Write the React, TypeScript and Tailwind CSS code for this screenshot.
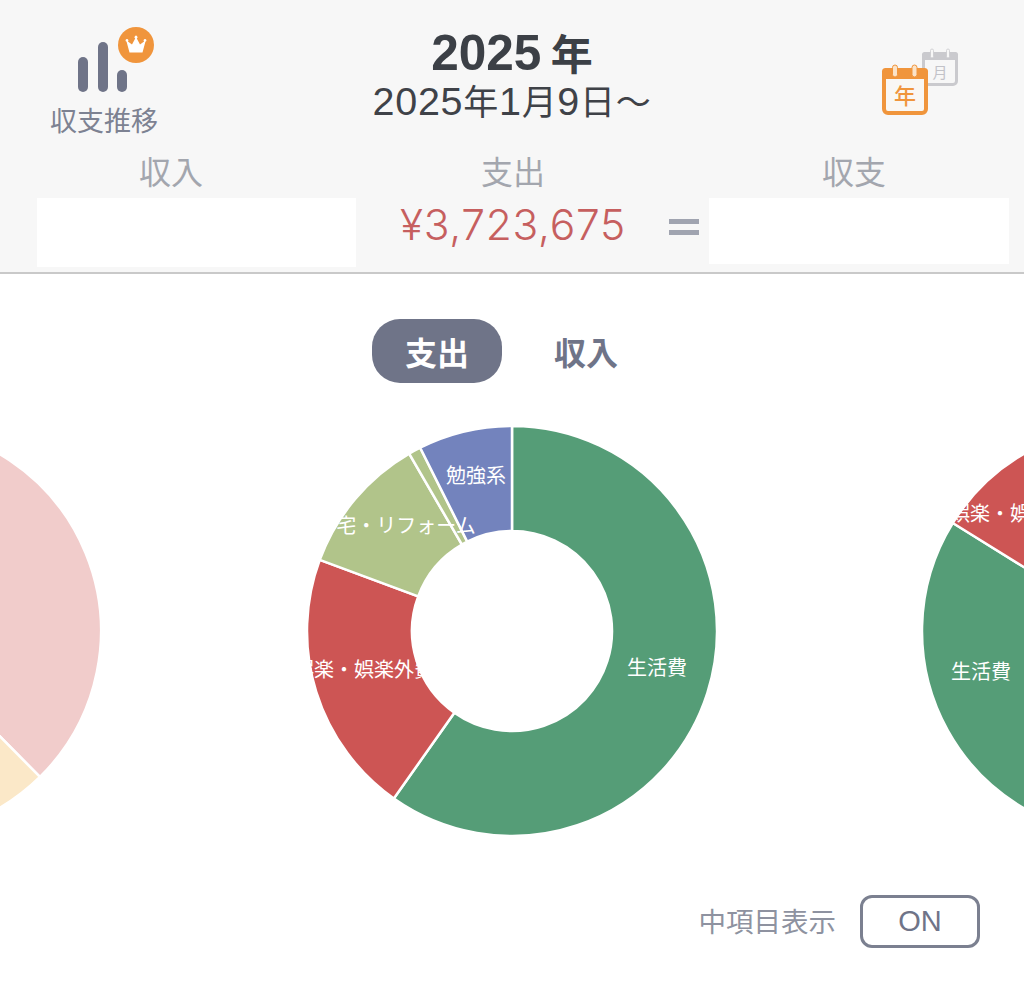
import React from "react";

const FONT = '"Noto Sans CJK JP", "Inter", sans-serif';
const LATIN = '"Inter", "Noto Sans CJK JP", sans-serif';
const HELV = '"Liberation Sans", "Noto Sans CJK JP", sans-serif';
const PRIMARY = "#6f7488";

function arc(cx: number, cy: number, R: number, r: number, a0: number, a1: number) {
  const p = (rad: number, a: number) => {
    const t = (a * Math.PI) / 180;
    return `${(cx + rad * Math.sin(t)).toFixed(2)} ${(cy - rad * Math.cos(t)).toFixed(2)}`;
  };
  const large = a1 - a0 > 180 ? 1 : 0;
  return `M${p(R, a0)} A${R} ${R} 0 ${large} 1 ${p(R, a1)} L${p(r, a1)} A${r} ${r} 0 ${large} 0 ${p(r, a0)} Z`;
}

type Seg = { a0: number; a1: number; c: string };

function Donut({ cx, cy, segs }: { cx: number; cy: number; segs: Seg[] }) {
  return (
    <g>
      {segs.map((s, i) => (
        <path key={i} d={arc(cx, cy, 205, 100, s.a0, s.a1)} fill={s.c} stroke="#ffffff" strokeWidth={2.5} />
      ))}
    </g>
  );
}

function BarsIcon() {
  return (
    <svg width="110" height="64" viewBox="0 0 110 64" className="block overflow-visible">
      <rect x="29" y="29" width="10" height="35" rx="5" fill={PRIMARY} />
      <rect x="49" y="14" width="10" height="50" rx="5" fill={PRIMARY} />
      <rect x="68" y="42" width="10" height="22" rx="5" fill={PRIMARY} />
      <circle cx="87" cy="17" r="18" fill="#f0953c" />
      <path
        d="M80.5 24.5 L77.6 13.8 a1.4 1.4 0 1 1 1.3 -.3 L83 16.6 L86.2 10.4 a1.5 1.5 0 1 1 1.6 0 L91 16.6 L95.1 13.5 a1.4 1.4 0 1 1 1.3 .3 L93.5 24.5 Z"
        fill="#ffffff"
      />
    </svg>
  );
}

function CalendarIcons() {
  return (
    <svg width="90" height="70" viewBox="0 0 90 70" className="block">
      <g>
        <rect x="43.5" y="7.5" width="33" height="31" rx="3.5" fill="#f7f7f7" stroke="#cacace" strokeWidth="3" />
        <rect x="42" y="6" width="36" height="8" rx="2.5" fill="#cacace" />
        <rect x="50.5" y="3" width="3" height="9" rx="1.5" fill="#f7f7f7" stroke="#cacace" strokeWidth="0.8" />
        <rect x="66.5" y="3" width="3" height="9" rx="1.5" fill="#f7f7f7" stroke="#cacace" strokeWidth="0.8" />
        <text x="60" y="32" textAnchor="middle" fontSize="15" fill="#c2c2c8" fontFamily={FONT}>
          月
        </text>
      </g>
      <g>
        <rect x="4" y="24" width="42" height="43" rx="4" fill="#f9f7f4" stroke="#f0953c" strokeWidth="4" />
        <rect x="2" y="22" width="46" height="11" rx="3.5" fill="#f0953c" />
        <rect x="12.5" y="19" width="5" height="12" rx="2.5" fill="#fbe3c8" stroke="#f0953c" strokeWidth="1" />
        <rect x="32" y="19" width="5" height="12" rx="2.5" fill="#fbe3c8" stroke="#f0953c" strokeWidth="1" />
        <text x="25" y="58" textAnchor="middle" fontSize="22" fontWeight="500" fill="#f0953c" fontFamily={FONT}>
          年
        </text>
      </g>
    </svg>
  );
}

function D({ children }: { children: React.ReactNode }) {
  return (
    <span className="text-[39.5px]" style={{ fontFamily: HELV }}>
      {children}
    </span>
  );
}

export default function App() {
  const GREEN = "#559d77";
  const RED = "#cd5554";
  const OLIVE = "#b1c48a";
  const BLUE = "#7383bd";
  return (
    <div className="w-[1024px] h-[992px] overflow-hidden bg-white" style={{ fontFamily: FONT }}>
      <header className="h-[274px] bg-[#f7f7f7] border-b-2 border-[#c9c9c9] flex flex-col">
        <div className="h-[143px] grid grid-cols-[210px_1fr_210px]">
          <div className="flex flex-col items-center pt-[28px]">
            <div className="w-[110px] -ml-[2px]">
              <BarsIcon />
            </div>
            <div className="text-[27px] leading-[40px] text-[#7d8292] -ml-[2px] mt-[8px] whitespace-nowrap">収支推移</div>
          </div>
          <div className="flex flex-col items-center pt-[26px]">
            <div className="text-[42px] leading-[52px] font-bold text-[#3c4046] whitespace-nowrap">
              <span className="text-[49.5px]" style={{ fontFamily: HELV }}>
                2025
              </span>{" "}
              年
            </div>
            <div className="text-[35px] leading-[42px] text-[#3f4248] tracking-[0.7px] whitespace-nowrap">
              <D>2025</D>年<D>1</D>月<D>9</D>日〜
            </div>
          </div>
          <div className="flex justify-start pt-[46px] pl-[66px]">
            <CalendarIcons />
          </div>
        </div>
        <div className="flex pl-[37px] pr-[15px]">
          <div className="w-[319px] flex flex-col items-start">
            <div className="h-[55px] w-[268px] text-center text-[32px] leading-[55px] text-[#a3a6ae]">収入</div>
            <div className="w-full h-[69px] bg-white" />
          </div>
          <div className="w-[314px] flex flex-col items-center">
            <div className="h-[55px] text-[32px] leading-[55px] text-[#a3a6ae]">支出</div>
            <div className="h-[54px] text-[42.5px] leading-[54px] text-[#c65f5f] tracking-[0.7px] font-light whitespace-nowrap" style={{ fontFamily: LATIN }}>
              ¥3,723,675
            </div>
          </div>
          <div className="w-[39px] pt-[76px] flex flex-col items-start">
            <div className="w-[30px] h-[16px] -ml-[1px] border-y-[5px] border-[#a0a4b0]" />
          </div>
          <div className="w-[300px] flex flex-col items-start">
            <div className="h-[55px] w-[290px] text-center text-[32px] leading-[55px] text-[#a3a6ae]">収支</div>
            <div className="w-full h-[66px] bg-white" />
          </div>
        </div>
      </header>
      <div className="flex justify-center items-center gap-[52px] pt-[45px] pr-[34px]">
        <div className="w-[130px] h-[64px] rounded-[28px] bg-[#6f7488] text-white text-[32px] font-bold flex items-center justify-center">支出</div>
        <div className="w-[64px] text-[#6f7488] text-[32px] font-bold whitespace-nowrap">収入</div>
      </div>
      <svg width="1024" height="500" viewBox="0 0 1024 500" className="block">
        <defs>
          <clipPath id="olive-label">
            <rect x="336" y="500" width="160" height="50" />
          </clipPath>
          <clipPath id="right-label">
            <rect x="955" y="490" width="69" height="50" />
          </clipPath>
        </defs>
        <g transform="translate(0 -383)">
          <Donut
            cx={-104}
            cy={631}
            segs={[
              { a0: 0, a1: 135.4, c: "#f1cccb" },
              { a0: 135.4, a1: 180, c: "#fbe8c8" },
            ]}
          />
          <Donut
            cx={512}
            cy={631}
            segs={[
              { a0: 0, a1: 215.2, c: GREEN },
              { a0: 215.2, a1: 290.3, c: RED },
              { a0: 290.3, a1: 329.9, c: OLIVE },
              { a0: 329.9, a1: 333.4, c: OLIVE },
              { a0: 333.4, a1: 360, c: BLUE },
            ]}
          />
          <Donut
            cx={1127}
            cy={631}
            segs={[
              { a0: 180, a1: 301.8, c: GREEN },
              { a0: 301.8, a1: 359.9, c: RED },
            ]}
          />
          <g fill="#ffffff" fontSize="20" fontFamily={FONT}>
            <text x="657" y="675" textAnchor="middle">生活費</text>
            <text x="476" y="483" textAnchor="middle">勉強系</text>
            <text x="396" y="533" textAnchor="middle" clipPath="url(#olive-label)">住宅・リフォーム</text>
            <text x="364" y="677" textAnchor="middle">娯楽・娯楽外費</text>
            <text x="981" y="679" textAnchor="middle">生活費</text>
            <text x="1020" y="521" textAnchor="middle" clipPath="url(#right-label)">娯楽・娯楽外費</text>
          </g>
        </g>
      </svg>
      <div className="flex justify-end items-center pr-[44px] gap-[24px] mt-[12px]">
        <div className="text-[27.5px] leading-[40px] text-[#8e92a0] whitespace-nowrap -mt-[3px] -ml-[2px]">中項目表示</div>
        <div className="w-[120px] h-[53px] rounded-[12px] border-[3px] border-[#7b8090] bg-white text-[#6f7488] text-[29px] flex items-center justify-center" style={{ fontFamily: HELV }}>
          ON
        </div>
      </div>
    </div>
  );
}
